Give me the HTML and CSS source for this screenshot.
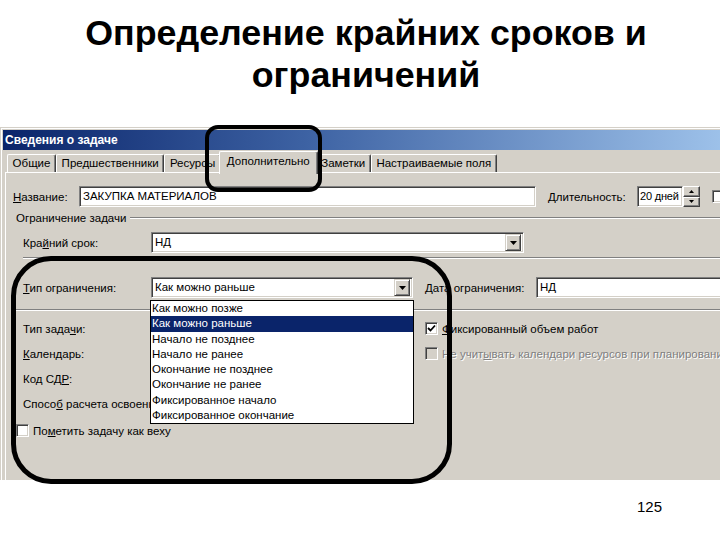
FILE: index.html
```html
<!DOCTYPE html>
<html lang="ru">
<head>
<meta charset="utf-8">
<title>Определение крайних сроков и ограничений</title>
<link rel="stylesheet" href="styles.css">
</head>
<body>
<div class="slide">
  <h1 class="title">Определение крайних сроков и<br>ограничений</h1>

  <div class="dialog">
    <div class="caption">Сведения о задаче</div>
    <div class="body">
      <div class="tabs">
        <div class="tab">Общие</div>
        <div class="tab">Предшественники</div>
        <div class="tab">Ресурсы</div>
        <div class="tab active">Дополнительно</div>
        <div class="tab">Заметки</div>
        <div class="tab">Настраиваемые поля</div>
      </div>
      <div class="panel">
        <div class="row">
          <span class="lbl lbl-name"><u>Н</u>азвание:</span>
          <div class="field field-name">ЗАКУПКА МАТЕРИАЛОВ</div>
          <span class="lbl lbl-dur"><u>Д</u>лительность:</span>
          <div class="field field-dur">20 дней</div>
          <div class="spin">
            <span class="spin-btn"><svg width="5" height="3" viewBox="0 0 5 3"><path d="M2.5 0 L5 3 L0 3 Z" fill="#000"/></svg></span>
            <span class="spin-btn"><svg width="5" height="3" viewBox="0 0 5 3"><path d="M0 0 L5 0 L2.5 3 Z" fill="#000"/></svg></span>
          </div>
          <span class="check check-est"></span>
        </div>

        <div class="group-head"><span>Ограничение задачи</span><span class="etch"></span></div>

        <div class="row indent row-deadline">
          <span class="lbl lbl-col">Кра<u>й</u>ний срок:</span>
          <div class="combo combo-long"><span class="combo-text">НД</span><span class="combo-btn"><svg width="7" height="4" viewBox="0 0 7 4"><path d="M0 0 L7 0 L3.5 4 Z" fill="#000"/></svg></span></div>
        </div>

        <div class="etch sep1"></div>

        <div class="row indent row-ctype">
          <span class="lbl lbl-col"><u>Т</u>ип ограничения:</span>
          <div class="combo combo-mid"><span class="combo-text">Как можно раньше</span><span class="combo-btn"><svg width="7" height="4" viewBox="0 0 7 4"><path d="M0 0 L7 0 L3.5 4 Z" fill="#000"/></svg></span></div>
          <span class="lbl lbl-date">Дата ограничения:</span>
          <div class="field field-date">НД</div>
        </div>

        <div class="etch sep2"></div>

        <div class="row indent row-low first">
          <span class="lbl lbl-col">Тип зада<u>ч</u>и:</span>
          <div class="combo combo-mid"></div>
          <span class="check checked"><svg width="9" height="9" viewBox="0 0 9 9"><path d="M1 4 L3.5 6.5 L8 1.5" fill="none" stroke="#000" stroke-width="1.8"/></svg></span>
          <span class="lbl"><u>Ф</u>иксированный объем работ</span>
        </div>
        <div class="row indent row-low">
          <span class="lbl lbl-col"><u>К</u>алендарь:</span>
          <div class="combo combo-mid"></div>
          <span class="check disabled"></span>
          <span class="lbl dis">Не учит<u>ы</u>вать календари ресурсов при планировании</span>
        </div>
        <div class="row indent row-low">
          <span class="lbl lbl-col">Код СД<u>Р</u>:</span>
          <div class="field combo-mid"></div>
        </div>
        <div class="row indent row-low">
          <span class="lbl lbl-wide">Спосо<u>б</u> расчета освоенного объема:</span>
        </div>
        <div class="row row-mile">
          <span class="check"></span>
          <span class="lbl">По<u>м</u>етить задачу как веху</span>
        </div>
      </div>
    </div>
  </div>

  <div class="pageno">125</div>

  <ul class="dropdown">
    <li>Как можно позже</li>
    <li class="sel">Как можно раньше</li>
    <li>Начало не позднее</li>
    <li>Начало не ранее</li>
    <li>Окончание не позднее</li>
    <li>Окончание не ранее</li>
    <li>Фиксированное начало</li>
    <li>Фиксированное окончание</li>
  </ul>

  <div class="hl hl-tab"></div>
  <div class="hl hl-main"></div>
</div>
</body>
</html>
```

FILE: styles.css
```css
* { box-sizing: border-box; }
html, body { margin: 0; padding: 0; background: #fff; }

.slide {
  position: relative;
  width: 720px;
  height: 540px;
  overflow: hidden;
  background: #fff;
  font-family: "Liberation Sans", Arial, sans-serif;
}

.title {
  margin: 0;
  padding: 12px 0 0 12px;
  height: 127px;
  font-size: 35.8px;
  line-height: 42px;
  font-weight: bold;
  text-align: center;
  color: #000;
}

/* ---------- dialog ---------- */
.dialog {
  width: 760px;
  height: 353px;
  background: #d4d0c8;
  border-top: 1px solid #d4d0c8;
  border-left: 1px solid #d4d0c8;
  box-shadow: inset 1px 1px 0 #fff;
  padding: 2px 0 0 2px;
  font-size: 11.5px;
  color: #000;
}

.caption {
  height: 20px;
  line-height: 20px;
  padding-left: 2px;
  color: #fff;
  font-weight: bold;
  font-size: 12px;
  background: linear-gradient(to right, #0a246a 0%, #3d62a3 40%, #a6caf0 100%);
}

.body {
  margin: 1px 0 0 2px;
}

.tabs {
  display: flex;
  align-items: flex-end;
  height: 21px;
  padding-left: 2px;
}

.tab {
  height: 18px;
  line-height: 16px;
  padding: 0 4.6px;
  font-size: 11.5px;
  background: #d4d0c8;
  border-top: 1px solid #fff;
  border-left: 1px solid #fff;
  border-right: 1px solid #404040;
  box-shadow: inset -1px 0 0 #808080;
  border-radius: 2px 2px 0 0;
  white-space: nowrap;
}

.tab.active {
  position: relative;
  z-index: 1;
  height: 23px;
  line-height: 18px;
  margin: 0 -2px -2px -2px;
  padding: 0 7px;
}

.panel {
  height: 310px;
  border-top: 1px solid #fff;
  border-left: 1px solid #fff;
  padding: 13px 0 0 7px;
}

.row {
  display: flex;
  align-items: center;
  height: 21px;
}

.indent { padding-left: 10px; }

.lbl { white-space: nowrap; }
.lbl-name { width: 66px; }
.lbl-dur { width: 89px; margin-left: 12px; }
.lbl-col { width: 128px; }
.lbl-date { width: 111px; margin-left: 12px; }
.lbl-wide { width: 300px; }

.dis {
  color: #808080;
  text-shadow: 1px 1px 0 #fff;
}

/* sunken edit field */
.field, .combo {
  height: 21px;
  background: #fff;
  border: 1px solid;
  border-color: #808080 #fff #fff #808080;
  box-shadow: inset 1px 1px 0 #404040, inset -1px -1px 0 #d4d0c8;
  line-height: 19px;
  padding-left: 3px;
  white-space: nowrap;
  overflow: hidden;
}

.field-name { width: 457px; }
.field-dur { width: 46px; font-size: 11px; padding-left: 2px; letter-spacing: -0.2px; }
.field-date { width: 200px; }

.combo {
  display: flex;
  align-items: center;
  justify-content: space-between;
  padding: 0 2px 0 3px;
}
.combo-long { width: 373px; }
.combo-mid { width: 262px; }

.combo-btn {
  width: 16px;
  height: 17px;
  display: flex;
  align-items: center;
  justify-content: center;
  background: #d4d0c8;
  border: 1px solid;
  border-color: #d4d0c8 #404040 #404040 #d4d0c8;
  box-shadow: inset 1px 1px 0 #fff, inset -1px -1px 0 #808080;
}

.spin {
  display: flex;
  flex-direction: column;
  width: 17px;
  height: 21px;
}
.spin-btn {
  flex: 1;
  display: flex;
  align-items: center;
  justify-content: center;
  background: #d4d0c8;
  border: 1px solid;
  border-color: #fff #404040 #404040 #fff;
  box-shadow: inset -1px -1px 0 #808080;
}

.check {
  display: flex;
  align-items: center;
  justify-content: center;
  width: 13px;
  height: 13px;
  flex: none;
  background: #fff;
  border: 1px solid;
  border-color: #808080 #fff #fff #808080;
  box-shadow: inset 1px 1px 0 #404040, inset -1px -1px 0 #d4d0c8;
  margin-right: 4px;
}
.check.disabled { background: #d4d0c8; }
.check-est { margin-left: 12px; }
.row-low .check { margin-left: 12px; }

/* group header & etched lines */
.group-head {
  display: flex;
  align-items: center;
  height: 13px;
  margin-top: 4px;
  padding-left: 3px;
}
.etch {
  flex: 1;
  height: 2px;
  border-top: 1px solid #808080;
  border-bottom: 1px solid #fff;
}
.group-head .etch { margin-left: 4px; }

.row-deadline { margin-top: 8px; }
.sep1 { margin: 4px 0 0 10px; }
.row-ctype { margin-top: 18px; }
.sep2 { margin: 11px 0 0 3px; }

.row-low { margin-top: 4px; }
.row-low.first { margin-top: 7px; }

.row-mile {
  margin-top: 9px;
  padding-left: 3px;
  height: 15px;
}

/* page number */
.pageno {
  margin-top: 18px;
  padding-right: 58px;
  text-align: right;
  font-size: 15px;
  line-height: 18px;
}

/* open dropdown list (overlay) */
.dropdown {
  position: absolute;
  left: 150px;
  top: 300px;
  width: 264px;
  height: 124px;
  margin: 0;
  padding: 0;
  list-style: none;
  background: #fff;
  border: 1px solid #000;
  font-size: 11.5px;
  z-index: 5;
}
.dropdown li {
  height: 15.25px;
  line-height: 15px;
  padding-left: 1px;
  white-space: nowrap;
}
.dropdown li.sel {
  background: #0a246a;
  color: #fff;
}

/* black highlight marks */
.hl {
  position: absolute;
  border: 4px solid #000;
  z-index: 10;
}
.hl-tab {
  left: 205px;
  top: 125px;
  width: 117px;
  height: 67px;
  border-radius: 13px;
}
.hl-main {
  left: 11px;
  top: 256px;
  width: 441px;
  height: 228px;
  border-width: 5px;
  border-radius: 40px;
}
```
